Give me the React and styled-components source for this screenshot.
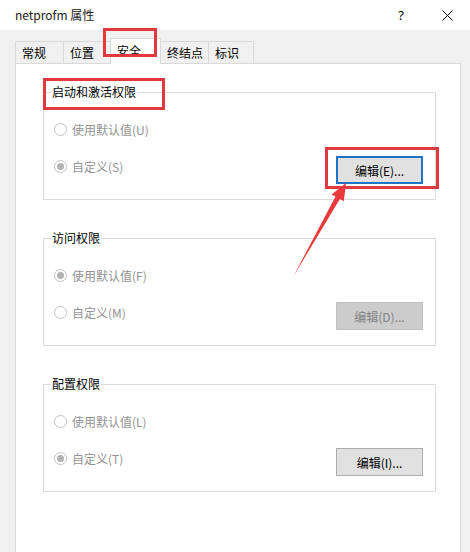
import styled, { createGlobalStyle } from "styled-components";

const GlobalStyle = createGlobalStyle`
  html, body {
    margin: 0;
    padding: 0;
  }
  body {
    font-family: "Noto Sans CJK SC", "Noto Sans", sans-serif;
    font-size: 12px;
    color: #000;
    background: #f0f0f0;
  }
`;

const Window = styled.div`
  position: relative;
  width: 470px;
  height: 552px;
  overflow: hidden;
  display: flex;
  flex-direction: column;
  background: #f0f0f0;
`;

const TitleBar = styled.div`
  height: 30px;
  flex: none;
  display: flex;
  align-items: center;
  background: #fff;
  padding-left: 15px;
`;

const Title = styled.div`
  flex: 1;
  font-size: 12px;
  line-height: 16px;
  color: #1a1a1a;
`;

const CaptionButton = styled.div`
  width: 46px;
  height: 30px;
  display: flex;
  align-items: center;
  justify-content: center;
  font-family: "Noto Sans", sans-serif;
  font-size: 13px;
`;

const Body = styled.div`
  flex: none;
  display: flex;
  flex-direction: column;
  padding: 8px 9px 0 15px;
`;

const TabStrip = styled.div`
  display: flex;
  align-items: flex-end;
  height: 25px;
  flex: none;
`;

const Tab = styled.div`
  position: relative;
  box-sizing: border-box;
  width: ${(p) => p.$w}px;
  height: ${(p) => (p.$active ? 26 : 22)}px;
  margin-bottom: ${(p) => (p.$active ? -1 : 0)}px;
  margin-left: ${(p) => (p.$first ? 0 : -1)}px;
  z-index: ${(p) => (p.$active ? 2 : 1)};
  display: flex;
  align-items: center;
  padding: 0 0 ${(p) => (p.$active ? 3 : 0)}px 6px;
  border: 1px solid #d9d9d9;
  border-bottom: none;
  background: ${(p) => (p.$active ? "#fff" : "#f0f0f0")};
  white-space: nowrap;
`;

const Panel = styled.div`
  height: 520px;
  background: #fff;
  border: 1px solid #d9d9d9;
  padding: 20px 24px 0 27px;
  display: flex;
  flex-direction: column;
`;

const Group = styled.fieldset`
  margin: 0;
  min-width: 0;
  padding: 19px 12px 15px 10px;
  border: 1px solid #dcdcdc;
  & + & {
    margin-top: 30px;
  }
`;

const Legend = styled.legend`
  position: relative;
  margin-left: -3px;
  padding: 0 1px;
  line-height: 16px;
  font-size: 12px;
  color: #000;
`;

const Row = styled.div`
  display: flex;
  justify-content: space-between;
  align-items: flex-start;
  & + & {
    margin-top: 17px;
  }
`;

const Radio = styled.div`
  display: flex;
  align-items: center;
  gap: 5px;
  height: 20px;
  color: #939393;
`;

const RadioDot = styled.span`
  box-sizing: border-box;
  width: 13px;
  height: 13px;
  border-radius: 50%;
  border: 1px solid #c4c4c4;
  background: #fff;
  display: flex;
  align-items: center;
  justify-content: center;
  &::after {
    content: "";
    width: 7px;
    height: 7px;
    border-radius: 50%;
    background: ${(p) => (p.$checked ? "#b2b2b2" : "transparent")};
  }
`;

const Button = styled.div`
  position: relative;
  box-sizing: border-box;
  width: 87px;
  height: 28px;
  display: flex;
  align-items: center;
  justify-content: center;
  font-size: 12px;
  background: ${(p) => (p.$disabled ? "#cccccc" : "#e1e1e1")};
  color: ${(p) => (p.$disabled ? "#838383" : "#000")};
  border: ${(p) =>
    p.$focused ? "2px solid #1f73c4" : p.$disabled ? "1px solid #bfbfbf" : "1px solid #adadad"};
`;

const RedBox = styled.div`
  position: absolute;
  top: ${(p) => p.$t}px;
  left: ${(p) => p.$l}px;
  right: ${(p) => p.$r}px;
  bottom: ${(p) => p.$b}px;
  border: 3px solid #e2393f;
  pointer-events: none;
  z-index: 5;
`;

const Overlay = styled.svg`
  position: absolute;
  left: 0;
  top: 0;
  pointer-events: none;
  z-index: 10;
`;

const tabs = [
  { label: "常规", w: 49 },
  { label: "位置", w: 48 },
  { label: "安全", w: 51, active: true },
  { label: "终结点", w: 49 },
  { label: "标识", w: 46 },
];

const groups = [
  {
    title: "启动和激活权限",
    options: [
      { label: "使用默认值(U)", checked: false },
      { label: "自定义(S)", checked: true },
    ],
    button: { label: "编辑(E)...", focused: true },
    mark: true,
  },
  {
    title: "访问权限",
    options: [
      { label: "使用默认值(F)", checked: true },
      { label: "自定义(M)", checked: false },
    ],
    button: { label: "编辑(D)...", disabled: true },
  },
  {
    title: "配置权限",
    options: [
      { label: "使用默认值(L)", checked: false },
      { label: "自定义(T)", checked: true },
    ],
    button: { label: "编辑(I)..." },
  },
];

function RadioOption({ label, checked }) {
  return (
    <Radio>
      <RadioDot $checked={checked} />
      {label}
    </Radio>
  );
}

export default function App() {
  return (
    <Window>
      <GlobalStyle />
      <TitleBar>
        <Title>netprofm 属性</Title>
        <CaptionButton>?</CaptionButton>
        <CaptionButton>
          <svg width="11" height="11" viewBox="0 0 11 11">
            <path d="M0.5 0.5L10.5 10.5M10.5 0.5L0.5 10.5" stroke="#000" strokeWidth="1" fill="none" />
          </svg>
        </CaptionButton>
      </TitleBar>
      <Body>
        <TabStrip>
          {tabs.map((t, i) => (
            <Tab key={t.label} $w={t.w} $active={t.active} $first={i === 0}>
              {t.label}
              {t.active && <RedBox $t={-11} $l={-8} $r={3} $b={7} />}
            </Tab>
          ))}
        </TabStrip>
        <Panel>
          {groups.map((g) => (
            <Group key={g.title}>
              <Legend>
                {g.title}
                {g.mark && <RedBox $t={-6} $l={-8} $r={-28} $b={-10} />}
              </Legend>
              <Row>
                <RadioOption {...g.options[0]} />
              </Row>
              <Row>
                <RadioOption {...g.options[1]} />
                <Button $focused={g.button.focused} $disabled={g.button.disabled}>
                  {g.button.label}
                  {g.mark && <RedBox $t={-11} $l={-13} $r={-18} $b={-7} />}
                </Button>
              </Row>
            </Group>
          ))}
        </Panel>
      </Body>
      <Overlay width="470" height="552" viewBox="0 0 470 552">
        <polygon
          points="293,277 335.5,196.6 331.6,194.4 346,183 343.8,201.2 339.9,199"
          fill="#e8393c"
        />
      </Overlay>
    </Window>
  );
}
